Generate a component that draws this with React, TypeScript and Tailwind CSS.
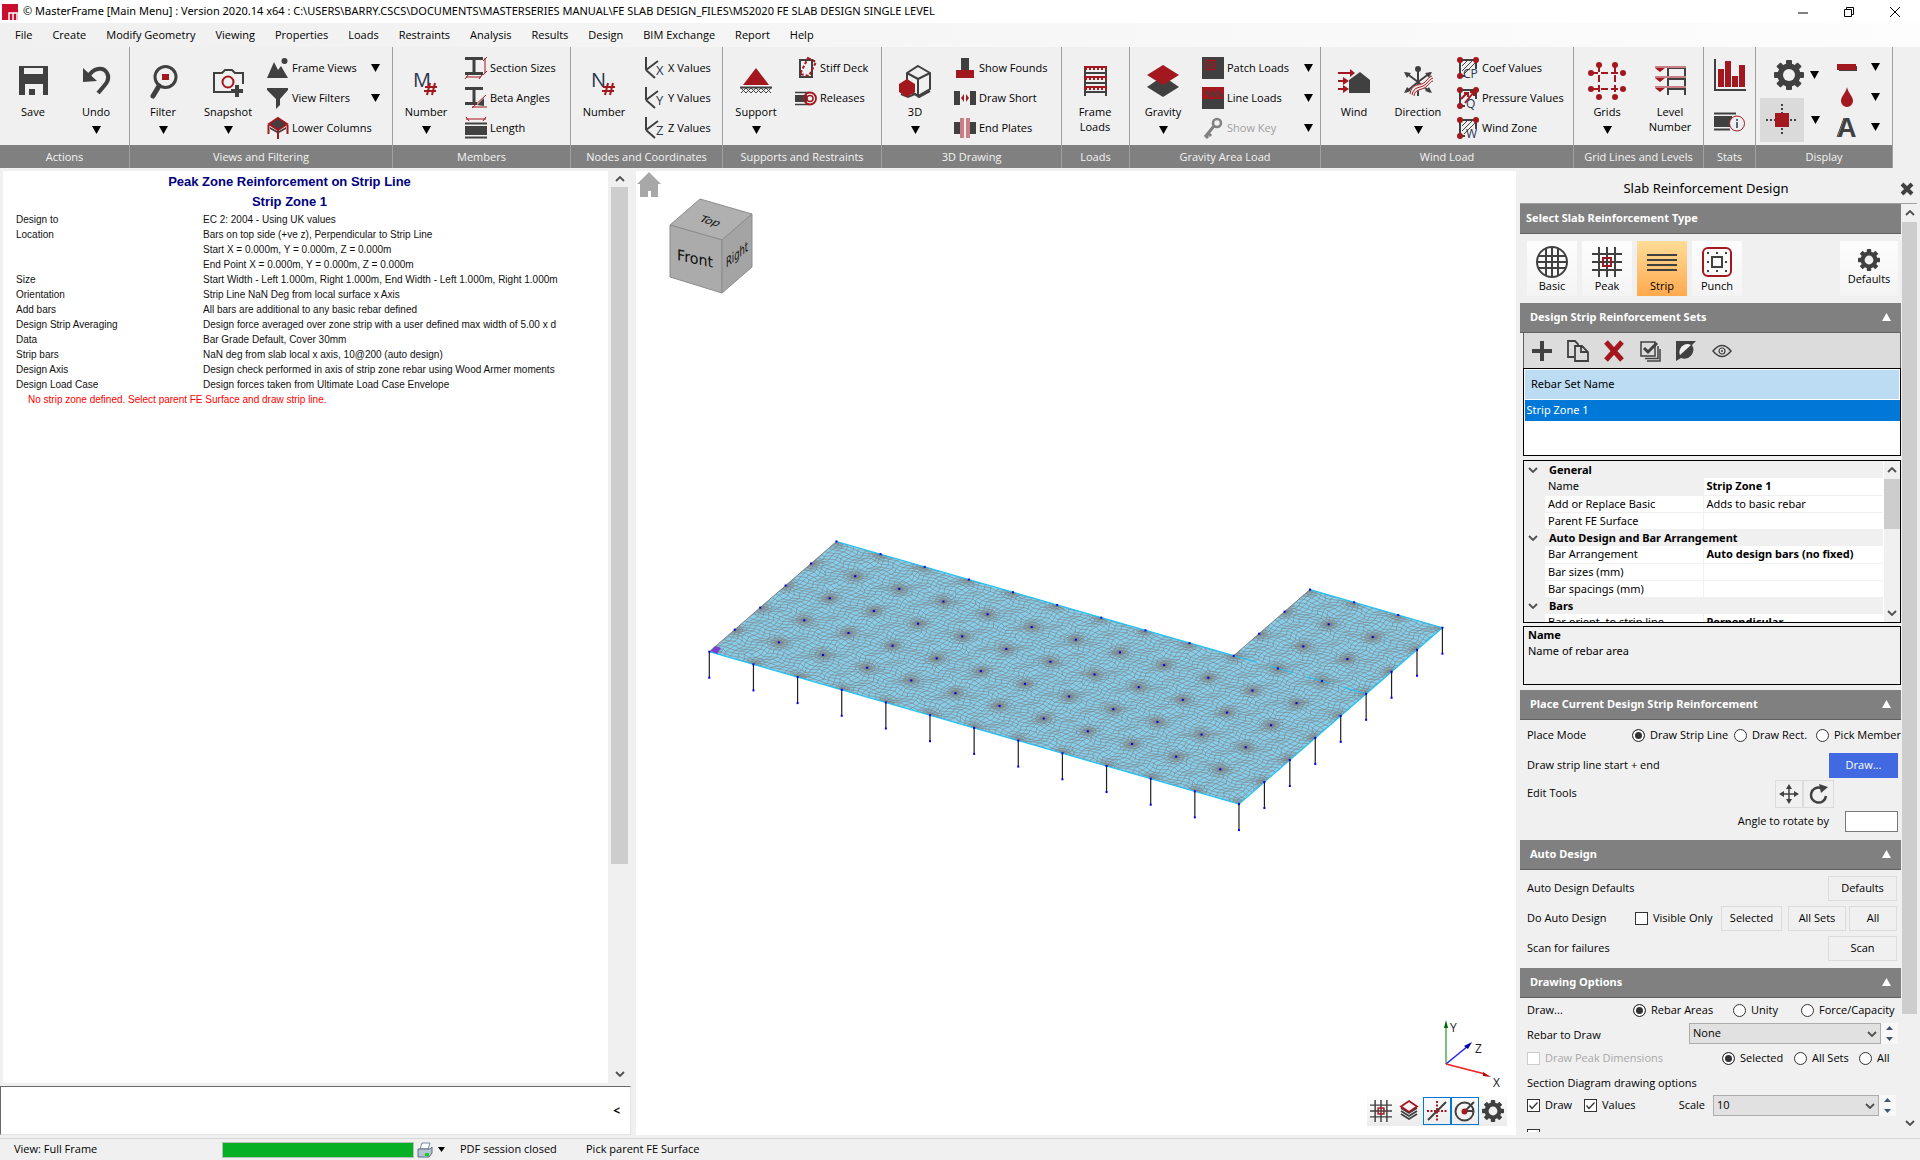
import { useMemo, useState, type ReactNode } from 'react';
import clsx from 'clsx';

const DARK = '#404040';
const RED = '#a3171e';
const NAVY = '#2b3550';

/* ---------- shared bits ---------- */

function Caret({ className }: { className?: string }) {
  return (
    <svg viewBox="0 0 9 8" className={clsx('h-2 w-[9px] shrink-0', className)}>
      <path d="M0 0H9L4.500 8Z" fill="#000" />
    </svg>
  );
}

function Chevron({ up, className }: { up?: boolean; className?: string }) {
  return (
    <svg viewBox="0 0 10 6" className={clsx('h-1.5 w-2.5 shrink-0', className)} fill="none" stroke="#505050" strokeWidth="1.8">
      {up ? <path d="M1 5L5 1L9 5" /> : <path d="M1 1L5 5L9 1" />}
    </svg>
  );
}

function Big({ children }: { children: ReactNode }) {
  return (
    <svg viewBox="0 0 32 32" className="h-8 w-8 overflow-visible" fill="none">
      {children}
    </svg>
  );
}

function Small({ children }: { children: ReactNode }) {
  return (
    <svg viewBox="0 0 22 22" className="h-[22px] w-[22px] shrink-0 overflow-visible" fill="none">
      {children}
    </svg>
  );
}

function GearShape({ size, className }: { size: number; className?: string }) {
  return (
    <svg viewBox="0 0 30 30" width={size} height={size} className={className}>
      {[0, 45, 90, 135].map((a) => (
        <rect key={a} x="12" y="0" width="6" height="30" rx="1" fill={DARK} transform={`rotate(${a} 15 15)`} />
      ))}
      <circle cx="15" cy="15" r="11.500" fill={DARK} />
      <circle cx="15" cy="15" r="6" fill="#f0f0f0" />
    </svg>
  );
}

/* ---------- ribbon icons ---------- */

const SaveIcon = () => (
  <Big>
    <path d="M2 1H31V30H26V19H8V30H2Z M12 24H18V30H12Z" fill={DARK} />
    <rect x="7" y="3" width="19" height="6" fill="#f0f0f0" />
  </Big>
);

const UndoIcon = () => (
  <Big>
    <path d="M8 12C13 3 23 1 27 8C31 15 25 20 18 28" stroke={DARK} strokeWidth="4" />
    <path d="M3 3V17L17 16Z" fill={DARK} />
  </Big>
);

const FilterIcon = () => (
  <Big>
    <circle cx="18.500" cy="12" r="10.500" stroke={DARK} strokeWidth="3" />
    <path d="M12 21L6 31" stroke={DARK} strokeWidth="5" strokeLinecap="round" />
    <rect x="15" y="9" width="7" height="6" fill={RED} />
  </Big>
);

const SnapshotIcon = () => (
  <Big>
    <path d="M21 27H2V8H10L13 5H20L23 8H31V19" stroke={DARK} strokeWidth="2" />
    <circle cx="16" cy="17" r="5.500" stroke={RED} strokeWidth="2" />
    <path d="M25 20V32M19 26H31" stroke={DARK} strokeWidth="4" />
  </Big>
);

function NumberIcon({ letter }: { letter: string }) {
  return (
    <Big>
      <text x="3" y="22" fontSize="20" fill={NAVY} fontFamily="Open Sans, sans-serif">{letter}</text>
      <path d="M20 18L17 30M25 18L22 30M15 22H27M14 26H26" stroke={RED} strokeWidth="2" />
    </Big>
  );
}

const SupportIcon = () => (
  <Big>
    <path d="M16 3L29 20H3Z" fill={RED} />
    <path d="M0 22.500H32" stroke={DARK} strokeWidth="2" />
    <path d="M1 28L6 23L11 28L16 23L21 28L26 23L31 28M1 23L6 28L11 23L16 28L21 23L26 28L31 23" stroke={DARK} strokeWidth="1" />
  </Big>
);

const CubeIcon = () => (
  <Big>
    <path d="M19 1L31 8V24L19 31L8 24V8ZM8 8L19 14L31 8M19 14V31" stroke={DARK} strokeWidth="2" />
    <path d="M2 29L9 32L16 29L20 32L31 26" stroke={DARK} strokeWidth="2" />
    <path d="M8 14L16 19V27L8 32L0 27V19Z" fill={RED} />
  </Big>
);

const FrameLoadsIcon = () => (
  <Big>
    <path d="M6 31V2M27 31V2M6 8H27M6 18H27M6 27H27" stroke={DARK} strokeWidth="2" />
    <path d="M5 3H28M5 13H28M5 23H28" stroke={RED} strokeWidth="4" />
    <path d="M8 4H26M8 14H26M8 24H26" stroke="#f0f0f0" strokeWidth="2" strokeDasharray="2 2" />
  </Big>
);

const GravityIcon = () => (
  <Big>
    <path d="M16 11L32 22L16 32L0 22Z" fill={DARK} />
    <path d="M16 0L32 10L16 20L0 10Z" fill={RED} />
  </Big>
);

const WindIcon = () => (
  <Big>
    <path d="M11 15L22 7L32 15V28H11Z" fill={DARK} />
    <path d="M0 8H13M0 16H6M0 24H6" stroke={RED} strokeWidth="2" />
    <path d="M12 4L17 8L12 12ZM5 12L11 16L5 20ZM5 20L11 24L5 28Z" fill={RED} />
  </Big>
);

const DirectionIcon = () => (
  <Big>
    <path d="M16 5V31M16 17L4 8M16 17L28 8M16 17L4 27M16 17L28 27" stroke={DARK} strokeWidth="2" />
    <circle cx="16" cy="4" r="3" fill={DARK} />
    <path d="M2 7L9 8L5 13ZM30 7L23 8L27 13ZM2 28L9 26L5 22ZM30 28L23 26L27 22Z" fill={DARK} />
    <path d="M10 30C12 20 19 24 24 19C27 16 28 14 31 13" stroke="#f0f0f0" strokeWidth="6" />
    <path d="M8 29C10 17 18 22 23 17C26 14 27 12 30 11M10 30C12 20 19 24 24 19C27 16 28 14 31 13M12 31C13 23 20 26 25 21C28 18 29 16 31 16" stroke={RED} strokeWidth="1" />
  </Big>
);

const GridsIcon = () => (
  <svg viewBox="0 0 38 38" className="h-[38px] w-[38px]" fill="none">
    <path d="M11 3V35M27 3V35M3 11H35M3 27H35" stroke={RED} strokeWidth="2" strokeDasharray="7 3" />
    {[11, 27].map((p) => (
      <g key={p} fill={RED}>
        <circle cx={p} cy="3" r="3" />
        <circle cx={p} cy="35" r="3" />
        <circle cx="3" cy={p} r="3" />
        <circle cx="35" cy={p} r="3" />
      </g>
    ))}
  </svg>
);

const LevelIcon = () => (
  <Big>
    <path d="M14 30V3H31V30M14 14H31M14 24H31" stroke={DARK} strokeWidth="2" />
    <path d="M1 2H32M1 12H32M1 22H32" stroke="#c97f84" strokeWidth="2" />
    <path d="M1 3H11L6 7ZM1 13H11L6 17ZM1 23H11L6 27Z" fill={RED} />
  </Big>
);

const FrameViewsIcon = () => (
  <Small>
    <path d="M0 21L7 5L11 13L14 9L21 21Z" fill={DARK} />
    <circle cx="17.500" cy="4" r="3" fill={DARK} />
  </Small>
);

const FunnelIcon = () => (
  <Small>
    <path d="M0 1H21V3L13 12V18L9 22V12L0 3Z" fill={DARK} />
  </Small>
);

const LowerColumnsIcon = () => (
  <Small>
    <path d="M3 10L10 14V16L3 12ZM19 10L12 14V16L19 12Z" fill={DARK} />
    <path d="M11 1L20 7L11 13L2 7Z" fill={DARK} stroke={RED} strokeWidth="2" />
    <path d="M1.500 8V17M20.500 8V17M11 13V22" stroke={RED} strokeWidth="2" />
  </Small>
);

const SectionSizesIcon = () => (
  <Small>
    <path d="M0 1.500H18M0 16.500H18M9 1V17" stroke={DARK} strokeWidth="3" />
    <path d="M20 1V16M1 20H16M18 4L22 0M18 18L22 14M0 22L3 18M14 22L17 18" stroke={RED} strokeWidth="1" />
  </Small>
);

const BetaIcon = () => (
  <Small>
    <path d="M0 1.500H18M0 16.500H12M9 1V17" stroke={DARK} strokeWidth="3" />
    <path d="M12 18L19 11V19Z" fill={DARK} />
    <path d="M7 21L21 8M7 20H22" stroke={RED} strokeWidth="1" />
  </Small>
);

const LengthIcon = () => (
  <Small>
    <path d="M0 6.500H22M0 20.500H22" stroke={DARK} strokeWidth="2" />
    <rect x="0" y="9" width="22" height="9" fill={DARK} />
    <path d="M1 2H21M1 0L4 4M18 4L21 0" stroke={RED} strokeWidth="1" />
  </Small>
);

function AxisValueIcon({ axis }: { axis: string }) {
  return (
    <Small>
      <path d="M3 0V13M3 13L15 4M3 13L12 21" stroke={DARK} strokeWidth="2" />
      <text x="13" y="18" fontSize="13" fill={NAVY} fontFamily="Open Sans, sans-serif">{axis}</text>
    </Small>
  );
}

const StiffDeckIcon = () => (
  <Small>
    <rect x="5" y="3" width="12" height="17" stroke={DARK} strokeWidth="2" />
    <path d="M13 1L21 5L14 19L5 17Z" stroke={RED} strokeWidth="2" strokeDasharray="3 2" />
  </Small>
);

const ReleasesIcon = () => (
  <Small>
    <path d="M0 5.500H14M0 17.500H14" stroke={DARK} strokeWidth="1.500" />
    <rect x="0" y="8" width="12" height="7" fill={DARK} />
    <circle cx="15" cy="11.500" r="6" stroke={RED} strokeWidth="1.800" />
    <circle cx="15" cy="11.500" r="3" stroke={RED} strokeWidth="1.500" />
  </Small>
);

const FoundsIcon = () => (
  <Small>
    <rect x="7" y="1" width="8" height="13" fill={DARK} />
    <rect x="2" y="13" width="18" height="8" fill={RED} />
  </Small>
);

const DrawShortIcon = () => (
  <Small>
    <path d="M0 4H6V18H0ZM16 4H22V18H16Z" fill={DARK} />
    <path d="M7 11L10 7V15ZM15 11L12 7V15Z" fill={RED} />
  </Small>
);

const EndPlatesIcon = () => (
  <Small>
    <path d="M0 5H6V17H0ZM16 5H22V17H16Z" fill={DARK} />
    <path d="M6 1H10V21H6ZM12 1H16V21H12Z" fill="#c97f84" />
  </Small>
);

const PatchLoadsIcon = () => (
  <Small>
    <rect width="22" height="22" fill={DARK} />
    <rect x="4" y="3.500" width="9" height="9" stroke={RED} strokeWidth="1.500" />
    <circle cx="8.500" cy="8" r="2.500" stroke={RED} />
  </Small>
);

const LineLoadsIcon = () => (
  <Small>
    <rect width="22" height="22" fill={DARK} />
    <rect width="22" height="12" fill={RED} />
    <path d="M3 4L9 10M9 4L15 10M15 4L21 10" stroke={DARK} strokeWidth="2" />
  </Small>
);

const KeyIcon = () => (
  <Small>
    <circle cx="15" cy="6" r="4" stroke="#808080" strokeWidth="2.500" />
    <path d="M12 9L3 20M6 16L9 19M3 18L6 21" stroke="#808080" strokeWidth="3" />
  </Small>
);

function WindCoefIcon({ letters, arrow }: { letters: string; arrow?: boolean }) {
  return (
    <Small>
      <path d="M3 19V3H19V12M3 19H8" stroke={DARK} strokeWidth="2" />
      {arrow ? (
        <path d="M4 12L10 6M8 16L16 6M7 6H11V10M13 5H17V9" stroke={RED} strokeWidth="2" />
      ) : (
        <path d="M5 9L10 4M5 14L15 4M7 17L18 6" stroke={DARK} strokeWidth="1" />
      )}
      <circle cx="3" cy="3" r="3" fill={RED} />
      <circle cx="19" cy="3" r="3" fill={RED} />
      <circle cx="3" cy="19" r="3" fill={RED} />
      <text x={letters.length > 1 ? 6 : 9} y="21" fontSize="12" fill={NAVY} fontFamily="Open Sans, sans-serif">{letters}</text>
    </Small>
  );
}

/* ---------- ribbon layout ---------- */

function Group({ label, className, children }: { label: string; className: string; children: ReactNode }) {
  return (
    <section className={clsx('flex shrink-0 flex-col border-r border-[#a0a0a0]', className)}>
      <div className="flex h-[98px]">{children}</div>
      <h2 className="h-[23px] bg-[#808080] text-center leading-[23px] text-[#f4f4f4]">{label}</h2>
    </section>
  );
}

function BigButton({ icon, label, caret, className }: { icon: ReactNode; label: string; caret?: boolean; className: string }) {
  return (
    <button className={clsx('flex shrink-0 flex-col items-center pt-[15px]', className)}>
      <span className="flex h-[38px] items-center">{icon}</span>
      <span className="mt-1 leading-[15px]">{label}</span>
      {caret && <Caret className="mt-[7px]" />}
    </button>
  );
}

interface SmallTool {
  label: string;
  icon: ReactNode;
  caret?: boolean;
  disabled?: boolean;
}

function SmallTools({ tools, className }: { tools: SmallTool[]; className?: string }) {
  return (
    <div className={clsx('flex flex-col pt-1.5', className)}>
      {tools.map((t) => (
        <button key={t.label} disabled={t.disabled} className="flex h-[30px] items-center gap-[3px] whitespace-nowrap text-left disabled:text-[#a0a0a0]">
          {t.icon}
          <span className="flex-1">{t.label}</span>
          {t.caret && <Caret />}
        </button>
      ))}
    </div>
  );
}

function Ribbon() {
  return (
    <div className="flex h-[121px] shrink-0 overflow-hidden bg-[#f0f0f0]">
      <Group label="Actions" className="w-[130px]">
        <BigButton icon={<SaveIcon />} label="Save" className="w-[66px]" />
        <BigButton icon={<UndoIcon />} label="Undo" caret className="w-[60px]" />
      </Group>
      <Group label="Views and Filtering" className="w-[263px]">
        <BigButton icon={<FilterIcon />} label="Filter" caret className="w-[66px]" />
        <BigButton icon={<SnapshotIcon />} label="Snapshot" caret className="w-[64px]" />
        <SmallTools
          className="ml-[7px] w-[113px]"
          tools={[
            { label: 'Frame Views', icon: <FrameViewsIcon />, caret: true },
            { label: 'View Filters', icon: <FunnelIcon />, caret: true },
            { label: 'Lower Columns', icon: <LowerColumnsIcon /> },
          ]}
        />
      </Group>
      <Group label="Members" className="w-[178px]">
        <BigButton icon={<NumberIcon letter="M" />} label="Number" caret className="w-[66px]" />
        <SmallTools
          className="ml-1.5"
          tools={[
            { label: 'Section Sizes', icon: <SectionSizesIcon /> },
            { label: 'Beta Angles', icon: <BetaIcon /> },
            { label: 'Length', icon: <LengthIcon /> },
          ]}
        />
      </Group>
      <Group label="Nodes and Coordinates" className="w-[152px]">
        <BigButton icon={<NumberIcon letter="N" />} label="Number" className="w-[66px]" />
        <SmallTools
          className="ml-1.5"
          tools={['X', 'Y', 'Z'].map((axis) => ({ label: `${axis} Values`, icon: <AxisValueIcon axis={axis} /> }))}
        />
      </Group>
      <Group label="Supports and Restraints" className="w-[159px]">
        <BigButton icon={<SupportIcon />} label="Support" caret className="w-[66px]" />
        <SmallTools
          className="ml-1.5"
          tools={[
            { label: 'Stiff Deck', icon: <StiffDeckIcon /> },
            { label: 'Releases', icon: <ReleasesIcon /> },
          ]}
        />
      </Group>
      <Group label="3D Drawing" className="w-[180px]">
        <BigButton icon={<CubeIcon />} label="3D" caret className="w-[66px]" />
        <SmallTools
          className="ml-1.5"
          tools={[
            { label: 'Show Founds', icon: <FoundsIcon /> },
            { label: 'Draw Short', icon: <DrawShortIcon /> },
            { label: 'End Plates', icon: <EndPlatesIcon /> },
          ]}
        />
      </Group>
      <Group label="Loads" className="w-[68px]">
        <BigButton icon={<FrameLoadsIcon />} label="Frame Loads" className="w-[66px] px-2" />
      </Group>
      <Group label="Gravity Area Load" className="w-[191px]">
        <BigButton icon={<GravityIcon />} label="Gravity" caret className="w-[66px]" />
        <SmallTools
          className="ml-1.5 w-[111px]"
          tools={[
            { label: 'Patch Loads', icon: <PatchLoadsIcon />, caret: true },
            { label: 'Line Loads', icon: <LineLoadsIcon />, caret: true },
            { label: 'Show Key', icon: <KeyIcon />, caret: true, disabled: true },
          ]}
        />
      </Group>
      <Group label="Wind Load" className="w-[253px]">
        <BigButton icon={<WindIcon />} label="Wind" className="w-[66px]" />
        <BigButton icon={<DirectionIcon />} label="Direction" caret className="w-[62px]" />
        <SmallTools
          className="ml-2"
          tools={[
            { label: 'Coef Values', icon: <WindCoefIcon letters="CP" /> },
            { label: 'Pressure Values', icon: <WindCoefIcon letters="Q" arrow /> },
            { label: 'Wind Zone', icon: <WindCoefIcon letters="W" /> },
          ]}
        />
      </Group>
      <Group label="Grid Lines and Levels" className="w-[130px]">
        <BigButton icon={<GridsIcon />} label="Grids" caret className="w-[66px]" />
        <BigButton icon={<LevelIcon />} label="Level Number" className="w-[60px] px-2" />
      </Group>
      <Group label="Stats" className="w-[52px]">
        <div className="flex w-full flex-col items-center gap-[21px] pt-3">
          <button aria-label="Statistics chart">
            <svg viewBox="0 0 32 32" className="h-8 w-8">
              <path d="M1 0V31H32" fill="none" stroke={DARK} strokeWidth="2" />
              <path d="M4 10H10V28H4ZM11 2H17V28H11ZM18 17H24V28H18ZM25 6H31V28H25Z" fill={RED} />
            </svg>
          </button>
          <button aria-label="Member information">
            <svg viewBox="0 0 32 20" className="h-5 w-8">
              <path d="M0 1.500H22M0 17.500H16" stroke={DARK} strokeWidth="2" />
              <rect y="4" width="18" height="11" fill={DARK} />
              <circle cx="23" cy="11.500" r="7.500" fill="#f0f0f0" stroke={RED} />
              <path d="M23 10V16M23 7V9" stroke={NAVY} strokeWidth="1.500" />
            </svg>
          </button>
        </div>
      </Group>
      <Group label="Display" className="w-[137px]">
        <div className="flex w-[66px] flex-col pl-1">
          <button aria-label="Display settings" className="flex h-[51px] items-center gap-1.5 pl-3.5 pt-1">
            <GearShape size={30} />
            <Caret />
          </button>
          <button aria-label="Node display" className="flex h-[44px] items-center gap-[7px]">
            <span className="flex h-11 w-11 shrink-0 items-center justify-center bg-[#dadada]">
              <svg viewBox="0 0 32 32" className="h-8 w-8">
                <path d="M16 0V32M0 16H32" stroke={DARK} strokeWidth="2" strokeDasharray="2 2" />
                <rect x="9" y="9" width="14" height="14" fill={RED} />
              </svg>
            </span>
            <Caret />
          </button>
        </div>
        <div className="ml-3.5 flex w-[44px] flex-col pt-[5px]">
          <button aria-label="Line colour" className="flex h-[30px] items-center justify-between">
            <Small>
              <path d="M3 10H21V15H3Z" fill={DARK} />
              <path d="M1 8H20V14H1Z" fill={RED} />
            </Small>
            <Caret />
          </button>
          <button aria-label="Fill colour" className="flex h-[30px] items-center justify-between">
            <Small>
              <path d="M11 1C12 7 17 10 17 15A6 6 0 0 1 5 15C5 10 10 7 11 1Z" fill={RED} />
            </Small>
            <Caret />
          </button>
          <button aria-label="Text style" className="flex h-[30px] items-center justify-between">
            <Small>
              <path d="M1 21L8 2" stroke={DARK} strokeWidth="1" />
              <text x="1" y="21" fontSize="27" fontWeight="bold" fill={DARK} fontFamily="Liberation Sans, sans-serif">A</text>
            </Small>
            <Caret />
          </button>
        </div>
      </Group>
    </div>
  );
}

/* ---------- report panel ---------- */

const REPORT_ROWS: [string, string][] = [
  ['Design to', 'EC 2: 2004 - Using UK values'],
  ['Location', 'Bars on top side (+ve z), Perpendicular to Strip Line'],
  ['', 'Start X = 0.000m, Y = 0.000m, Z = 0.000m'],
  ['', 'End Point X = 0.000m, Y = 0.000m, Z = 0.000m'],
  ['Size', 'Start Width - Left 1.000m, Right 1.000m, End Width - Left 1.000m, Right 1.000m'],
  ['Orientation', 'Strip Line NaN Deg from local surface x Axis'],
  ['Add bars', 'All bars are additional to any basic rebar defined'],
  ['Design Strip Averaging', 'Design force averaged over zone strip with a user defined max width of 5.00 x d'],
  ['Data', 'Bar Grade Default, Cover 30mm'],
  ['Strip bars', 'NaN deg from slab local x axis, 10@200 (auto design)'],
  ['Design Axis', 'Design check performed in axis of strip zone rebar using Wood Armer moments'],
  ['Design Load Case', 'Design forces taken from Ultimate Load Case Envelope'],
];

function ReportPanel() {
  return (
    <div className="flex w-[636px] shrink-0 flex-col">
      <div className="flex min-h-0 flex-1 pl-[3px]">
        <div className="flex-1 overflow-hidden bg-white font-['Liberation_Sans',sans-serif] text-[10px]">
          <div className="pr-8 pt-px text-center text-[13px] font-bold leading-5 text-[#000080]">
            <h1>Peak Zone Reinforcement on Strip Line</h1>
            <h2>Strip Zone 1</h2>
          </div>
          <table className="ml-[13px] w-[560px] table-fixed whitespace-nowrap leading-[15px] text-[#101010]">
            <colgroup>
              <col className="w-[187px]" />
              <col />
            </colgroup>
            <tbody>
              {REPORT_ROWS.map(([name, value], i) => (
                <tr key={i}>
                  <th scope="row" className="h-[15px] p-0 text-left font-normal">{name}</th>
                  <td className="p-0">{value}</td>
                </tr>
              ))}
            </tbody>
          </table>
          <p className="ml-[25px] leading-[15px] text-[#ff0000]">No strip zone defined. Select parent FE Surface and draw strip line.</p>
        </div>
        <div className="ml-[3px] mr-2 flex w-[17px] flex-col items-center bg-[#f0f0f0]">
          <Chevron up className="my-[5px]" />
          <div className="h-[677px] w-full bg-[#cdcdcd]" />
          <Chevron className="mb-1.5 mt-auto" />
        </div>
      </div>
      <div className="mr-[5px] mt-[3px] flex h-[49px] items-center justify-end border border-[#e3e3e3] border-l-[#696969] border-t-[#696969] bg-white pr-2.5">
        <button aria-label="Collapse" className="text-[12px] font-bold">&lt;</button>
      </div>
    </div>
  );
}

/* ---------- model view ---------- */

const BAYS_X = 12;
const BAYS_Y = 8;
const DIV = 9;

function inSlab(u: number, v: number) {
  return v <= 5.001 || u >= 8.999;
}

function project(u: number, v: number): [number, number] {
  return [73.3 + 44.14 * u + 25.43 * v, 480.7 + 12.7 * u - 22.05 * v];
}

// element edges bunch up towards the column heads
function warp(u: number, v: number): [number, number] {
  let wu = u + 0.035 * Math.sin(v * 12 + u * 2.3) + 0.015 * Math.sin(v * 23 + u * 19);
  let wv = v + 0.035 * Math.sin(u * 12 - v * 1.9) + 0.015 * Math.sin(u * 27 - v * 18);
  const cu = Math.round(wu);
  const cv = Math.round(wv);
  const du = wu - cu;
  const dv = wv - cv;
  const r = Math.hypot(du, dv);
  if (r < 0.5) {
    const f = 0.5 + 0.5 * (r / 0.5);
    wu = cu + du * f;
    wv = cv + dv * f;
  }
  return [wu, wv];
}

function point(u: number, v: number) {
  const [x, y] = project(...warp(u, v));
  return `${x.toFixed(1)} ${y.toFixed(1)}`;
}

function buildMesh() {
  let d = '';
  const nu = BAYS_X * DIV;
  const nv = BAYS_Y * DIV;
  for (let i = 0; i <= nu; i++) {
    for (let j = 0; j <= nv; j++) {
      const u = i / DIV;
      const v = j / DIV;
      if (!inSlab(u, v)) continue;
      const p = point(u, v);
      if (i < nu) d += `M${p}L${point(u + 1 / DIV, v)}`;
      if (j < nv) d += `M${p}L${point(u, v + 1 / DIV)}`;
    }
  }
  return d;
}

const SLAB = 'M73.300 480.700L603 633.100L806.400 456.700L674 418.600L597.700 484.700L200.500 370.500Z';

function ModelDrawing() {
  const mesh = useMemo(buildMesh, []);
  const nodes: [number, number][] = [];
  const columns: [number, number][] = [];
  for (let i = 0; i <= BAYS_X; i++) {
    for (let j = 0; j <= BAYS_Y; j++) {
      if (!inSlab(i, j)) continue;
      nodes.push(project(i, j));
      if (j === 0 || i === BAYS_X) columns.push(project(i, j));
    }
  }
  return (
    <svg viewBox="0 0 880 964" className="h-full w-full" role="img" aria-label="Slab finite element model">
      <defs>
        <clipPath id="slab"><path d={SLAB} /></clipPath>
        <radialGradient id="head">
          <stop offset="0" stopColor="#707070" stopOpacity="0.9" />
          <stop offset="0.5" stopColor="#808080" stopOpacity="0.5" />
          <stop offset="1" stopColor="#808080" stopOpacity="0" />
        </radialGradient>
      </defs>
      <path d={SLAB} fill="#87ceeb" />
      <g clipPath="url(#slab)">
        <path d={mesh} fill="none" stroke="#808080" strokeWidth="0.6" />
        {nodes.map(([x, y], i) => (
          <g key={i}>
            <ellipse cx={x} cy={y} rx="10" ry="6" fill="url(#head)" />
            <ellipse cx={x} cy={y} rx="8" ry="5" fill="none" stroke="#808080" strokeWidth="0.4" />
            <ellipse cx={x} cy={y} rx="12" ry="7" fill="none" stroke="#808080" strokeWidth="0.4" />
          </g>
        ))}
      </g>
      <path d="M73.300 480.700L603 633.100L806.400 456.700L674 418.600M597.700 484.700L200.500 370.500" fill="none" stroke="#1fc3f5" strokeWidth="1.200" />
      <path d="M73.300 480.700L200.500 370.500M597.700 484.700L674 418.600" fill="none" stroke="#808080" />
      <path d="M597.700 484.700L730 522.800" stroke="#1fc3f5" strokeDasharray="24 14" />
      <path d="M75 480L79 475L85 477L81 483Z" fill="#7a3fd0" />
      {columns.map(([x, y], i) => (
        <g key={i}>
          <path d={`M${x} ${y}V${y + 26}`} stroke="#202020" strokeWidth="1.200" />
          <rect x={x - 1} y={y + 25} width="2" height="2" fill="#0000ff" />
        </g>
      ))}
      {nodes.map(([x, y], i) => (
        <rect key={i} x={x - 1} y={y - 1} width="2" height="2" fill="#0000e0" />
      ))}
    </svg>
  );
}

function ViewCube() {
  return (
    <svg viewBox="0 0 84 96" className="h-24 w-[84px]" fontFamily="DejaVu Sans, sans-serif" fontSize="14" fill="#101010">
      <g fill="#b0b0b0" stroke="#8c8c8c" strokeLinejoin="round">
        <path d="M31 1L83 16L53 42L1 27Z" />
        <path d="M1 27L53 42V95L1 79Z" fill="#ababab" />
        <path d="M53 42L83 16V69L53 95Z" fill="#a4a4a4" />
      </g>
      <text transform="matrix(.9 .25 -.55 .6 29 23)" fontSize="13">Top</text>
      <text transform="matrix(.95 .2 0 1 8 62)" fontSize="15">Front</text>
      <text transform="matrix(.6 -.48 0 1 57 70)" fontSize="14">Right</text>
    </svg>
  );
}

function PeakGrid({ className }: { className?: string }) {
  return (
    <svg viewBox="0 0 30 30" className={className} fill="none">
      <path d="M7 0V30M15 0V30M23 0V30M0 7H30M0 15H30M0 23H30" stroke={DARK} strokeWidth="2" />
      <rect x="11" y="11" width="8" height="8" stroke={RED} strokeWidth="2" />
    </svg>
  );
}

function AxisTriad() {
  return (
    <svg viewBox="0 0 64 72" className="h-[72px] w-16 overflow-visible" fill="none" fontFamily="Open Sans, sans-serif" fontSize="12">
      <path d="M6 46V6" stroke="#4caf50" strokeWidth="1.500" />
      <path d="M6 2L8 10H4Z" fill="#006400" />
      <path d="M6 46L28 28" stroke="#2020f0" strokeWidth="1.500" />
      <path d="M32 24L24 28L28 31Z" fill="#0000b0" />
      <path d="M6 46L45 56" stroke="#f02020" strokeWidth="1.500" />
      <path d="M51 59L43 54V58Z" fill="#c00000" />
      <g fill="#202020">
        <text x="10" y="14">Y</text>
        <text x="35" y="35">Z</text>
        <text x="53" y="69">X</text>
      </g>
    </svg>
  );
}

function ViewTools() {
  const [picked, setPicked] = useState([2, 3]);
  const toggle = (i: number) => setPicked((p) => (p.includes(i) ? p.filter((n) => n !== i) : [...p, i]));
  const tools = [
    { name: 'Grid snap', icon: <PeakGrid className="h-[22px] w-[22px]" /> },
    {
      name: 'Layers',
      icon: (
        <Small>
          <path d="M3 11L11 16L19 11M3 14L11 19L19 14M3 8L11 13L19 8" stroke={DARK} strokeWidth="1.800" />
          <path d="M11 1L19 6.500L11 12L3 6.500Z" fill="#f6f6f6" stroke={RED} strokeWidth="1.800" />
        </Small>
      ),
    },
    {
      name: 'Line snap',
      icon: (
        <Small>
          <path d="M2 20L20 2" stroke={DARK} strokeWidth="2" />
          <path d="M11 1V21M1 11H21" stroke={RED} strokeWidth="2" strokeDasharray="2 1.500" />
        </Small>
      ),
    },
    {
      name: 'Angle snap',
      icon: (
        <Small>
          <circle cx="10.500" cy="11.500" r="9" stroke={DARK} strokeWidth="2" />
          <path d="M11 11L20 2M11 11H20" stroke={DARK} strokeWidth="2" />
          <circle cx="10.500" cy="11.500" r="3" fill={RED} />
        </Small>
      ),
    },
    { name: 'View settings', icon: <GearShape size={22} /> },
  ];
  return (
    <div className="flex h-[30px] items-center bg-gradient-to-b from-[#fcfcfc] to-[#ececec]">
      {tools.map((t, i) => (
        <button
          key={t.name}
          aria-label={t.name}
          onClick={() => toggle(i)}
          className={clsx('flex h-7 w-7 items-center justify-center border', picked.includes(i) ? 'border-[#0078d7]' : 'border-transparent')}
        >
          {t.icon}
        </button>
      ))}
    </div>
  );
}

function ModelView() {
  return (
    <main className="relative min-w-0 flex-1 bg-white">
      <ModelDrawing />
      <button aria-label="Home view" className="absolute left-px top-px">
        <svg viewBox="0 0 24 26" className="h-[26px] w-6">
          <path d="M12 0L24 12H21V25H14V19H11V25H3V12H0Z" fill="#a8a8a8" />
        </svg>
      </button>
      <div className="absolute left-[33px] top-[27px]">
        <ViewCube />
      </div>
      <div className="absolute bottom-[45px] right-3">
        <AxisTriad />
      </div>
      <div className="absolute bottom-[9px] right-[9px]">
        <ViewTools />
      </div>
    </main>
  );
}

/* ---------- slab reinforcement panel ---------- */

const FLAT_BUTTON = 'h-[25px] border border-[#dcdcdc] bg-[#f0f0f0]';
const GRID_FONT = "font-['Noto_Sans',sans-serif] text-[11px]";

function Section({ title, closed, children }: { title: string; closed?: boolean; children: ReactNode }) {
  return (
    <section>
      <h3 className={clsx('flex h-[30px] items-center justify-between border-b border-[#606060] bg-[#808080] pb-px pr-2.5 font-bold text-white', GRID_FONT, closed ? 'pl-1.5' : 'pl-2.5')}>
        {title}
        {!closed && (
          <svg viewBox="0 0 9 8" className="h-2 w-[9px]">
            <path d="M0 8H9L4.500 0Z" fill="#fff" />
          </svg>
        )}
      </h3>
      {children}
    </section>
  );
}

function Radio({ name, label, checked, className }: { name: string; label: string; checked?: boolean; className: string }) {
  return (
    <label className={clsx('flex shrink-0 items-center gap-[5px] whitespace-nowrap', className)}>
      <input
        type="radio"
        name={name}
        defaultChecked={checked}
        className="h-[13px] w-[13px] shrink-0 appearance-none rounded-full border border-[#333] bg-white checked:bg-[#333] checked:shadow-[inset_0_0_0_2px_white]"
      />
      {label}
    </label>
  );
}

function Check({ label, checked, disabled, className }: { label: string; checked?: boolean; disabled?: boolean; className?: string }) {
  return (
    <label className={clsx('flex shrink-0 items-center gap-[5px] whitespace-nowrap', disabled && 'text-[#a8a8a8]', className)}>
      <span className="relative flex h-[13px] w-[13px]">
        <input
          type="checkbox"
          defaultChecked={checked}
          disabled={disabled}
          className="peer h-[13px] w-[13px] appearance-none border border-[#333] bg-white disabled:border-[#ccc]"
        />
        <svg viewBox="0 0 13 13" className="pointer-events-none absolute inset-0 hidden peer-checked:block" fill="none" stroke="#333" strokeWidth="1.300">
          <path d="M2.500 6.500L5 9.500L10.500 3.500" />
        </svg>
      </span>
      {label}
    </label>
  );
}

function Dropdown({ id, value, className }: { id: string; value: string; className: string }) {
  return (
    <span className={clsx('relative flex h-[21px] shrink-0', className)}>
      <select id={id} className="w-full appearance-none border border-[#adadad] bg-[#e1e1e1] pl-[3px]">
        <option>{value}</option>
      </select>
      <Chevron className="pointer-events-none absolute right-1 top-2" />
    </span>
  );
}

function Spinner() {
  return (
    <span className="flex h-[21px] w-[17px] shrink-0 flex-col bg-[#f8f8f8]">
      <button aria-label="Increase" className="flex flex-1 items-center justify-center">
        <svg viewBox="0 0 7 4" className="h-1 w-[7px]"><path d="M0 4H7L3.500 0Z" fill="#44546f" /></svg>
      </button>
      <button aria-label="Decrease" className="flex flex-1 items-center justify-center">
        <svg viewBox="0 0 7 4" className="h-1 w-[7px]"><path d="M0 0H7L3.500 4Z" fill="#44546f" /></svg>
      </button>
    </span>
  );
}

const TYPES = [
  {
    name: 'Basic',
    icon: (
      <Big>
        <circle cx="16" cy="16" r="15" stroke={DARK} strokeWidth="2" />
        <path d="M10 2V30M16 1V31M22 2V30M2 10H30M1 16H31M2 22H30" stroke={DARK} strokeWidth="2" />
      </Big>
    ),
  },
  { name: 'Peak', icon: <PeakGrid className="h-[30px] w-[30px]" /> },
  {
    name: 'Strip',
    icon: (
      <svg viewBox="0 0 30 20" className="h-5 w-[30px]">
        <path d="M0 3H30M0 8H30M0 13H30M0 18H30" stroke={DARK} strokeWidth="2" />
      </svg>
    ),
  },
  {
    name: 'Punch',
    icon: (
      <Big>
        <rect x="2" y="2" width="28" height="28" rx="5" stroke={RED} strokeWidth="2" />
        <rect x="11" y="11" width="10" height="10" stroke={DARK} strokeWidth="2" />
        <path d="M6 7H8M15 7H17M24 7H26M6 16H8M24 16H26M6 25H8M15 25H17M24 25H26" stroke={DARK} strokeWidth="2" />
      </Big>
    ),
  },
];

function TypePicker() {
  const [active, setActive] = useState('Strip');
  return (
    <div className="flex h-[69px] gap-[5px] pl-[7px] pr-[3px] pt-[7px]">
      {TYPES.map((t) => (
        <button
          key={t.name}
          onClick={() => setActive(t.name)}
          className={clsx(
            'flex h-[55px] w-[50px] flex-col items-center bg-gradient-to-b pt-[5px]',
            active === t.name ? 'from-[#ffdc96] to-[#ffa94d]' : 'from-[#fdfdfd] to-[#f4f4f4]',
          )}
        >
          <span className="flex h-8 items-center">{t.icon}</span>
          <span className="leading-[15px]">{t.name}</span>
        </button>
      ))}
      <button className="ml-auto flex h-[55px] w-[58px] flex-col items-center bg-gradient-to-b from-[#fdfdfd] to-[#f4f4f4] pt-2">
        <GearShape size={22} />
        <span className="leading-[15px]">Defaults</span>
      </button>
    </div>
  );
}

function SetToolbar() {
  return (
    <div className="flex h-[35px] items-center gap-3.5 border-x border-[#606060] bg-[#dcdcdc] pl-[7px]">
      <button aria-label="Add set">
        <Small><path d="M11 1V21M1 11H21" stroke={DARK} strokeWidth="4" /></Small>
      </button>
      <button aria-label="Copy set">
        <Small>
          <path d="M7 17H1V1H8L11 4V5M8 6H15L21 12V21H8ZM14 6V12H21" stroke={DARK} strokeWidth="1.800" />
        </Small>
      </button>
      <button aria-label="Delete set">
        <Small><path d="M3 2L19 20M19 2L3 20" stroke={RED} strokeWidth="5" /></Small>
      </button>
      <button aria-label="Select sets">
        <Small>
          <path d="M2 2H16V16H2ZM19 6V18.500H6M21 9V21H8" stroke={DARK} strokeWidth="1.500" />
          <path d="M5 8L9 12L18 3" stroke={DARK} strokeWidth="3" />
        </Small>
      </button>
      <button aria-label="Invert selection">
        <Small>
          <path d="M1 1H21L17 5A9 9 0 0 1 6 18L1 21Z" fill={DARK} />
          <path d="M5 15A8 8 0 0 1 16 5Z" fill="#f0f0f0" />
        </Small>
      </button>
      <button aria-label="Show or hide set">
        <Small>
          <path d="M2 11Q11 0 20 11Q11 22 2 11Z" stroke={DARK} strokeWidth="1.500" />
          <circle cx="11" cy="11" r="3" stroke={DARK} strokeWidth="1.200" />
          <circle cx="11" cy="11" r="1" fill={DARK} />
        </Small>
      </button>
    </div>
  );
}

interface PropRow {
  name: string;
  value?: string;
  heading?: boolean;
  bold?: boolean;
  current?: boolean;
}

const PROPS: PropRow[] = [
  { name: 'General', heading: true },
  { name: 'Name', value: 'Strip Zone 1', bold: true, current: true },
  { name: 'Add or Replace Basic', value: 'Adds to basic rebar' },
  { name: 'Parent FE Surface', value: '' },
  { name: 'Auto Design and Bar Arrangement', heading: true },
  { name: 'Bar Arrangement', value: 'Auto design bars (no fixed)', bold: true },
  { name: 'Bar sizes (mm)', value: '' },
  { name: 'Bar spacings (mm)', value: '' },
  { name: 'Bars', heading: true },
  { name: 'Bar orient. to strip line', value: 'Perpendicular', bold: true },
];

function PropertyGrid() {
  return (
    <div className={clsx('mt-1 flex h-[163px] overflow-hidden border border-black bg-[#f0f0f0] leading-4', GRID_FONT)}>
      <table className="h-full flex-1 table-fixed border-collapse self-start">
        <colgroup>
          <col className="w-[21px]" />
          <col className="w-[158px]" />
          <col />
        </colgroup>
        <tbody>
          {PROPS.map((p) =>
            p.heading ? (
              <tr key={p.name} className="h-[17px]">
                <td className="p-0 pl-1"><Chevron /></td>
                <th colSpan={2} className="p-0 pl-1 text-left font-bold">{p.name}</th>
              </tr>
            ) : (
              <tr key={p.name} className="h-[17px]">
                <td className="p-0" />
                <td className={clsx('border-b border-r border-[#f0f0f0] p-0 pl-[3px]', !p.current && 'bg-white')}>{p.name}</td>
                <td className={clsx('border-b border-[#f0f0f0] bg-white p-0 pl-[3px]', p.bold && 'font-bold')}>{p.value}</td>
              </tr>
            ),
          )}
        </tbody>
      </table>
      <div className="flex w-[17px] shrink-0 flex-col items-center border-l border-white">
        <Chevron up className="my-[6px]" />
        <div className="h-[50px] w-full bg-[#cdcdcd]" />
        <Chevron className="mb-1.5 mt-auto" />
      </div>
    </div>
  );
}

function SlabPanel() {
  return (
    <aside className="flex w-[404px] shrink-0 flex-col overflow-hidden pl-1 pr-[3px]">
      <div className="flex h-[33px] shrink-0 items-center border-b border-[#a0a0a0] pt-1">
        <h2 className="flex-1 pr-2 text-center font-['Noto_Sans',sans-serif] text-[13px]">Slab Reinforcement Design</h2>
        <button aria-label="Close panel" className="mr-[3px]">
          <svg viewBox="0 0 14 14" className="h-3.5 w-3.5"><path d="M2 2L12 12M12 2L2 12" stroke={DARK} strokeWidth="4" /></svg>
        </button>
      </div>
      <div className="flex min-h-0 flex-1 pb-[3px]">
        <div className="flex-1 overflow-hidden">
          <Section title="Select Slab Reinforcement Type" closed>
            <TypePicker />
          </Section>
          <Section title="Design Strip Reinforcement Sets">
            <div className="pb-[5px] pl-[3px]">
              <SetToolbar />
              <div className="h-[88px] border border-black bg-white">
                <table className={clsx('w-full', GRID_FONT)}>
                  <thead>
                    <tr>
                      <th className="h-[30px] border border-white bg-[#bbdcf3] p-0 pl-1.5 text-left font-normal">Rebar Set Name</th>
                    </tr>
                  </thead>
                  <tbody>
                    <tr>
                      <td className="h-[21px] bg-[#0078d7] p-0 pl-0.5 text-white">Strip Zone 1</td>
                    </tr>
                  </tbody>
                </table>
              </div>
              <PropertyGrid />
              <div className={clsx('mt-[3px] h-[59px] border border-black pl-1 leading-4', GRID_FONT)}>
                <h4 className="font-bold">Name</h4>
                <p>Name of rebar area</p>
              </div>
            </div>
          </Section>
          <Section title="Place Current Design Strip Reinforcement">
            <div className="pb-2 pl-[7px] pr-[3px]">
              <div className="flex h-[30px] items-center">
                <span className="flex-1">Place Mode</span>
                <Radio name="place" label="Draw Strip Line" checked className="w-[102px]" />
                <Radio name="place" label="Draw Rect." className="w-[82px]" />
                <Radio name="place" label="Pick Member" className="w-[82px]" />
              </div>
              <div className="mt-0.5 flex h-[27px] items-center justify-between">
                <span>Draw strip line start + end</span>
                <button className="h-[25px] w-[69px] bg-[#4169e1] text-white">Draw...</button>
              </div>
              <div className="flex h-[29px] items-center pr-16">
                <span className="flex-1">Edit Tools</span>
                <button aria-label="Move" className="flex h-7 w-7 items-center justify-center border border-[#dcdcdc]">
                  <svg viewBox="0 0 20 20" className="h-5 w-5" fill={DARK}>
                    <path d="M10 2V18M2 10H18" stroke={DARK} strokeWidth="1.500" />
                    <path d="M10 0L13 5H7ZM10 20L13 15H7ZM0 10L5 7V13ZM20 10L15 7V13Z" />
                  </svg>
                </button>
                <button aria-label="Rotate" className="flex h-7 w-[31px] items-center justify-center border border-[#dcdcdc]">
                  <svg viewBox="0 0 20 20" className="h-5 w-5" fill="none">
                    <path d="M12 4A7.500 7.500 0 1 0 17 12" stroke={DARK} strokeWidth="2.500" />
                    <path d="M10 0L19 3L12 9Z" fill={DARK} />
                  </svg>
                </button>
              </div>
              <div className="mt-[3px] flex h-[21px] items-center justify-end gap-4">
                <label htmlFor="angle">Angle to rotate by</label>
                <input id="angle" type="text" className="h-[21px] w-[53px] border border-[#7a7a7a] bg-white px-1" />
              </div>
            </div>
          </Section>
          <Section title="Auto Design">
            <div className="flex flex-col gap-[5px] pb-[7px] pl-[7px] pr-1 pt-1.5">
              <div className="flex items-center justify-between">
                <span>Auto Design Defaults</span>
                <button className={clsx(FLAT_BUTTON, 'w-[69px]')}>Defaults</button>
              </div>
              <div className="flex items-center">
                <span className="flex-1">Do Auto Design</span>
                <Check label="Visible Only" className="w-[86px]" />
                <button className={clsx(FLAT_BUTTON, 'w-[61px]')}>Selected</button>
                <button className={clsx(FLAT_BUTTON, 'ml-1.5 w-[58px]')}>All Sets</button>
                <button className={clsx(FLAT_BUTTON, 'ml-[3px] w-12')}>All</button>
              </div>
              <div className="flex items-center justify-between">
                <span>Scan for failures</span>
                <button className={clsx(FLAT_BUTTON, 'w-[69px]')}>Scan</button>
              </div>
            </div>
          </Section>
          <Section title="Drawing Options">
            <div className="pl-[7px] pr-[3px]">
              <div className="flex h-6 items-center">
                <span className="flex-1">Draw...</span>
                <Radio name="draw" label="Rebar Areas" checked className="w-[100px]" />
                <Radio name="draw" label="Unity" className="w-[68px]" />
                <Radio name="draw" label="Force/Capacity" className="w-[97px]" />
              </div>
              <div className="mt-px flex h-[21px] items-center">
                <label htmlFor="rebar" className="flex-1 pt-1">Rebar to Draw</label>
                <Dropdown id="rebar" value="None" className="w-[192px]" />
                <Spinner />
              </div>
              <div className="flex h-7 items-center">
                <Check label="Draw Peak Dimensions" disabled />
                <span className="flex-1" />
                <Radio name="scope" label="Selected" checked className="w-[72px]" />
                <Radio name="scope" label="All Sets" className="w-[65px]" />
                <Radio name="scope" label="All" className="w-[39px]" />
              </div>
              <div className="flex h-[23px] items-center">Section Diagram drawing options</div>
              <div className="flex h-[21px] items-center pr-0.5">
                <Check label="Draw" checked className="w-[57px]" />
                <Check label="Values" checked />
                <label htmlFor="scale" className="flex-1 pr-2 text-right">Scale</label>
                <Dropdown id="scale" value="10" className="w-[166px]" />
                <Spinner />
              </div>
              <div className="mt-[13px]">
                <Check label="" />
              </div>
            </div>
          </Section>
        </div>
        <div className="ml-px flex w-[15px] shrink-0 flex-col items-center">
          <Chevron up className="my-[6px]" />
          <div className="h-[792px] w-full bg-[#cdcdcd]" />
          <Chevron className="mb-1.5 mt-auto" />
        </div>
      </div>
    </aside>
  );
}

/* ---------- window frame ---------- */

const MENUS = ['File', 'Create', 'Modify Geometry', 'Viewing', 'Properties', 'Loads', 'Restraints', 'Analysis', 'Results', 'Design', 'BIM Exchange', 'Report', 'Help'];

function TitleBar() {
  return (
    <header className="flex h-[23px] shrink-0 items-center bg-white pl-0.5">
      <svg viewBox="0 0 16 16" className="h-4 w-4">
        <rect width="16" height="16" fill="#c8102e" />
        <path d="M7 16V9H15V16M11 9V16" fill="none" stroke="#fff" strokeWidth="1.500" />
      </svg>
      <span className="ml-[5px] flex-1 truncate font-['Noto_Sans',sans-serif]">
        © MasterFrame [Main Menu] : Version 2020.14 x64 : C:\USERS\BARRY.CSCS\DOCUMENTS\MASTERSERIES MANUAL\FE SLAB DESIGN_FILES\MS2020 FE SLAB DESIGN SINGLE LEVEL
      </span>
      <div className="flex gap-[34px] pr-[19px]">
        <button aria-label="Minimise">
          <svg viewBox="0 0 12 12" className="h-3 w-3"><path d="M1 7H11" stroke="#000" /></svg>
        </button>
        <button aria-label="Restore">
          <svg viewBox="0 0 12 12" className="h-3 w-3" fill="none" stroke="#000"><path d="M1.500 3.500H8.500V10.500H1.500ZM3.500 3.500V1.500H10.500V8.500H8.500" /></svg>
        </button>
        <button aria-label="Close">
          <svg viewBox="0 0 12 12" className="h-3 w-3" stroke="#000"><path d="M1 1L11 11M11 1L1 11" /></svg>
        </button>
      </div>
    </header>
  );
}

function StatusBar() {
  return (
    <footer className="flex h-[22px] shrink-0 items-center border-t border-[#d7d7d7] pl-3.5">
      <span className="w-[208px]">View: Full Frame</span>
      <div className="h-4 w-[192px] border border-[#bcbcbc] bg-[#06b025]" />
      <button aria-label="Print" className="ml-[3px] flex items-center gap-[5px]">
        <svg viewBox="0 0 16 16" className="h-4 w-4">
          <path d="M5 1H13L11 7H3Z" fill="#fff" stroke="#7a8aa0" />
          <path d="M1 7H13L15 5V11L12 15H1Z" fill="#b8c4d6" stroke="#5b6b84" />
          <rect x="8" y="11" width="4" height="3" fill="#20d020" />
        </svg>
        <svg viewBox="0 0 7 5" className="h-[5px] w-[7px]"><path d="M0 0H7L3.500 5Z" fill="#000" /></svg>
      </button>
      <span className="ml-[15px] w-[126px]">PDF session closed</span>
      <span>Pick parent FE Surface</span>
    </footer>
  );
}

export default function App() {
  return (
    <div className="flex h-screen flex-col overflow-hidden bg-[#f0f0f0] font-['Open_Sans',sans-serif] text-[11px] text-black">
      <TitleBar />
      <nav className="flex h-6 shrink-0 items-center gap-5 bg-gradient-to-r from-[#f0f0f0] to-[#fdfdfd] pl-[15px]">
        {MENUS.map((m) => (
          <button key={m}>{m}</button>
        ))}
      </nav>
      <Ribbon />
      <div className="mb-[3px] mt-[3px] flex min-h-0 flex-1">
        <ReportPanel />
        <ModelView />
        <SlabPanel />
      </div>
      <StatusBar />
    </div>
  );
}
